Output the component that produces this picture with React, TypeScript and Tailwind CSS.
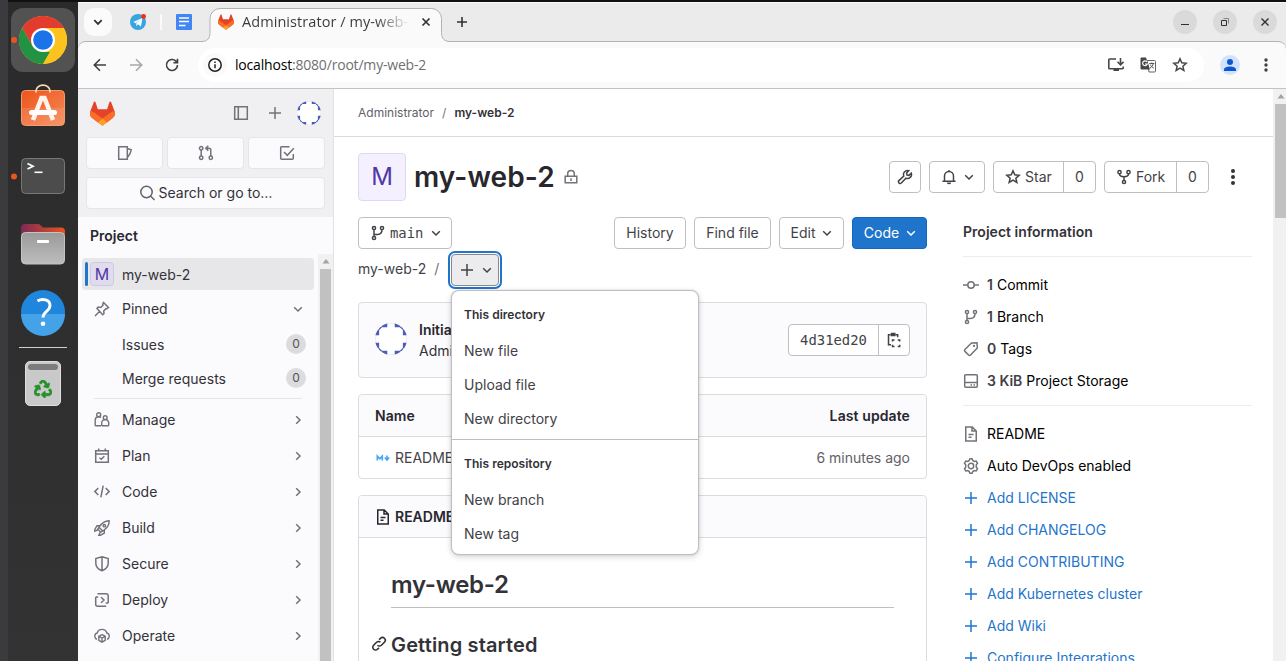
import type { ReactNode } from "react";
import { FaRecycle } from "react-icons/fa";

type IconProps = { d?: string; children?: ReactNode; className?: string; w?: number; size?: number };

function Icon({ d, children, className = "", w = 1.5, size = 16 }: IconProps) {
  return (
    <svg
      width={size}
      height={size}
      viewBox="0 0 16 16"
      fill="none"
      stroke="currentColor"
      strokeWidth={w}
      className={`shrink-0 ${className}`}
    >
      {d && <path d={d} />}
      {children}
    </svg>
  );
}

const P = {
  chevronDown: "M4.2 6.2 8 10l3.8-3.8",
  chevronRight: "M6.2 4.2 10 8l-3.8 3.8",
  plus: "M8 2v12M2 8h12",
  star: "M8 1.8l1.75 4.05 4.4.4-3.3 2.9 1 4.3L8 11.2l-3.85 2.25 1-4.3-3.3-2.9 4.4-.4z",
  doc: "M2.750 .9h6.500L13.250 5v10.100H2.750zM9 .9V5h4.200M5.500 8.500h5M5.500 11.250h3",
};

function Chevron({ className = "" }: { className?: string }) {
  return <Icon d={P.chevronDown} className={className} />;
}

function BranchIcon({ className = "" }: { className?: string }) {
  return (
    <Icon className={className}>
      <circle cx="4" cy="3" r="1.6" />
      <circle cx="4" cy="13" r="1.6" />
      <circle cx="12" cy="3" r="1.6" />
      <path d="M4 4.6v6.8M4 9.5h3.5C10 9.5 12 8 12 4.6" />
    </Icon>
  );
}

function Tanuki({ size }: { size: number }) {
  return (
    <svg width={size} height={size} viewBox="0 0 25 24" className="shrink-0">
      <path
        fill="#E24329"
        d="m24.507 9.5-.034-.09L21.082.562a.896.896 0 0 0-1.694.091l-2.29 7.01H7.825L5.535.653a.898.898 0 0 0-1.694-.09L.451 9.411.416 9.5a6.297 6.297 0 0 0 2.09 7.278l.012.01.03.022 5.16 3.867 2.56 1.935 1.554 1.176a1.051 1.051 0 0 0 1.268 0l1.555-1.176 2.56-1.935 5.197-3.89.014-.01A6.297 6.297 0 0 0 24.507 9.5Z"
      />
      <path
        fill="#FC6D26"
        d="m24.507 9.5-.034-.09a11.44 11.44 0 0 0-4.56 2.051l-7.447 5.632 4.742 3.584 5.197-3.89.014-.01A6.297 6.297 0 0 0 24.507 9.5Z"
      />
      <path
        fill="#FCA326"
        d="m7.707 20.677 2.56 1.935 1.555 1.176a1.051 1.051 0 0 0 1.268 0l1.555-1.176 2.56-1.935-4.743-3.584-4.755 3.584Z"
      />
      <path
        fill="#FC6D26"
        d="M5.01 11.461a11.43 11.43 0 0 0-4.56-2.05L.416 9.5a6.297 6.297 0 0 0 2.09 7.278l.012.01.03.022 5.16 3.867 4.745-3.584-7.444-5.632Z"
      />
    </svg>
  );
}

function Identicon({ size }: { size: number }) {
  const quarter = "M4.900 0h4.300v3.100H4.900zM14.800 0h4.300v3.100h-4.300zM2.800 5.700V2.800h2.900z";
  return (
    <svg width={size} height={size} viewBox="0 0 24 24" className="shrink-0">
      <defs>
        <clipPath id={`ident${size}`}>
          <circle cx="12" cy="12" r="12" />
        </clipPath>
      </defs>
      <circle cx="12" cy="12" r="11.7" fill="#fff" stroke="#e4e4ea" strokeWidth="0.5" />
      <g fill="#4e5cb6" clipPath={`url(#ident${size})`}>
        <path d={quarter} />
        <path d={quarter} transform="rotate(90 12 12)" />
        <path d={quarter} transform="rotate(180 12 12)" />
        <path d={quarter} transform="rotate(270 12 12)" />
      </g>
    </svg>
  );
}

function Dock() {
  return (
    <div className="flex w-[70px] shrink-0 flex-col items-center bg-[#2c2c2c] bg-linear-to-b from-[#2a2a2a] to-[#333333]">
      <div className="relative mt-[6px] flex h-16 w-16 items-center justify-center rounded-xl bg-[#525252]">
        <span className="absolute top-[29px] left-0 h-[6px] w-[6px] rounded-full bg-[#e95420]" />
        <svg width="48" height="48" viewBox="0 0 48 48">
          <circle cx="24" cy="24" r="24" fill="#fcc31e" />
          <path d="M3.2 12A24 24 0 0 1 44.8 12H24L13.6 18z" fill="#e33b2e" />
          <path d="M24 12H3.2L13.6 30z" fill="#e33b2e" />
          <path d="M3.2 12 13.6 30 24 36h7L24 48A24 24 0 0 1 3.2 12z" fill="#229342" />
          <path d="M44.8 12H24l10.4 18L24 48A24 24 0 0 0 44.8 12z" fill="#fcc31e" />
          <circle cx="24" cy="24" r="12" fill="#fff" />
          <circle cx="24" cy="24" r="9.8" fill="#1a73e8" />
        </svg>
      </div>
      <svg width="48" height="48" viewBox="0 0 48 48" className="mt-[9px]">
        <defs>
          <linearGradient id="bag" x1="0" y1="0" x2="1" y2="1">
            <stop offset="0" stopColor="#ee541c" />
            <stop offset="1" stopColor="#f58a57" />
          </linearGradient>
        </defs>
        <rect x="2.5" y="9.5" width="43" height="35" rx="4" fill="url(#bag)" stroke="#f59b70" />
        <path d="M3 27h42v14a3 3 0 0 1-3 3H6a3 3 0 0 1-3-3z" fill="#fff" opacity=".1" />
        <path d="M17 11.5V10a7 5.8 0 0 1 14 0v1.500" fill="none" stroke="#f6dcae" strokeWidth="1.8" />
        <path d="M14 39 22.500 17h3L34 39" fill="none" stroke="#fff3ec" strokeWidth="4.6" />
        <rect x="10" y="29" width="28" height="5" rx="2.500" fill="#fff" />
      </svg>
      <svg width="64" height="48" viewBox="0 0 64 48" className="mt-[24px]">
        <circle cx="3" cy="23.500" r="3" fill="#e95420" />
        <rect x="10.500" y="5.500" width="43" height="35" rx="4" fill="#4c4c4c" stroke="#777" />
        <path d="m16.500 10.500 5.500 2.700-5.500 2.700" fill="none" stroke="#fff" strokeWidth="1.700" />
        <path d="M23.500 19.300h8" stroke="#fff" strokeWidth="1.600" />
      </svg>
      <svg width="48" height="48" viewBox="0 0 48 48" className="mt-[20px]">
        <defs>
          <linearGradient id="fold" x1="0" y1="0" x2="1" y2="0">
            <stop offset="0" stopColor="#7d2a55" />
            <stop offset="1" stopColor="#e95420" />
          </linearGradient>
          <linearGradient id="front" x1="0" y1="0" x2="0" y2="1">
            <stop offset="0" stopColor="#9a9a9a" />
            <stop offset="1" stopColor="#bdbdbd" />
          </linearGradient>
        </defs>
        <path d="M2 7a4 4 0 0 1 4-4h14l4 3.500h18a4 4 0 0 1 4 4V20H2z" fill="url(#fold)" />
        <rect x="2.500" y="11.500" width="43" height="31.500" rx="4" fill="url(#front)" stroke="#c4c4c4" />
        <rect x="18" y="19" width="12" height="3" rx="1" fill="#fff" />
      </svg>
      <svg width="48" height="48" viewBox="0 0 48 48" className="mt-[19px]">
        <circle cx="24" cy="24" r="22" fill="#1f86dc" />
        <path d="M2 26h44a22 22 0 0 1-44 0z" fill="#44a3e8" />
        <path d="M18.500 13c5-3 12.500-1.500 12.500 4.500 0 6-7 5.800-7 12" fill="none" stroke="#fff" strokeWidth="2.900" />
        <circle cx="24" cy="35.800" r="2.300" fill="#fff" />
      </svg>
      <div className="mt-[11px] h-px w-12 bg-[#cfcfcf]" />
      <div className="mt-[13px] flex h-[45px] w-[36px] flex-col items-center rounded-[5px] border border-[#dedede] bg-[#c9c9c9] pt-[2px]">
        <div className="h-[6px] w-[30px] rounded-[3px] bg-[#7c7c7c]" />
        <FaRecycle size={18} stroke="#26902a" strokeWidth={22} className="mt-[10px] text-[#26902a]" />
      </div>
    </div>
  );
}

function WindowButton({ children }: { children: ReactNode }) {
  return (
    <div className="flex h-6 w-6 items-center justify-center rounded-full bg-[#dadada] text-[#303030]">
      <svg width="12" height="12" viewBox="0 0 12 12" fill="none" stroke="currentColor">
        {children}
      </svg>
    </div>
  );
}

function TabStrip() {
  return (
    <div className="relative flex h-[39px] shrink-0 items-center border-t border-[#fafafa] bg-[#ebebeb] pb-[1px]">
      <svg width="248" height="36" viewBox="0 0 248 36" className="absolute top-[4px] left-[124px] z-10">
        <path
          d="M0 35.500V34.500H0c5 0 8-3 8-9V11.500a10 10 0 0 1 10-10h211.500a10 10 0 0 1 10 10v14c0 6 3 9 8.500 9v1z"
          fill="#fafafa"
        />
        <path
          d="M0 34.500c5 0 8-3 8-9V11.500a10 10 0 0 1 10-10h211.500a10 10 0 0 1 10 10v14c0 6 3 9 8.500 9"
          fill="none"
          stroke="#b2b2b2"
        />
      </svg>
      <div className="ml-[6px] flex h-7 w-7 items-center justify-center rounded-[10px] bg-[#fbfbfb]">
        <Icon d="M4.300 6.200 8 9.900l3.700-3.700" w={1.800} className="text-[#333]" />
      </div>
      <svg width="16" height="16" viewBox="0 0 16 16" className="ml-[18px]">
        <circle cx="8" cy="8" r="8" fill="#35a6de" />
        <path d="M3 8 12.500 4l-1.600 8.500-3-2.300-1.700 1.700-.4-3z" fill="#fff" />
        <path d="m5.800 8.900 4.700-3.300-3.600 4.100-.7 2.200z" fill="#b5dcf0" />
        <circle cx="13.600" cy="2.500" r="2.400" fill="#fb2b0d" />
      </svg>
      <div className="ml-[14px] h-4 w-[2px] bg-[#fafafa]" />
      <svg width="16" height="16" viewBox="0 0 16 16" className="ml-[14px]">
        <rect width="16" height="16" rx="1" fill="#4285f4" />
        <path d="M3 4h10M3 7.500h10M3 11.500h6.500" stroke="#fff" strokeWidth="1.700" />
      </svg>
      <div className="relative z-20 ml-[26px] flex w-[216px] items-center">
        <Tanuki size={16} />
        <div className="ml-2 w-[168px] overflow-hidden bg-linear-to-r from-[#3a3a3a] from-80% to-[#3a3a3a]/0 bg-clip-text font-['Open_Sans',sans-serif] text-[14.500px] leading-5 tracking-[0.070px] whitespace-nowrap text-transparent">
          Administrator / my-web-
        </div>
        <Icon d="M4.500 4.500l7 7M11.500 4.500l-7 7" w={1.700} className="ml-2 text-[#333]" />
      </div>
      <Icon d="M8 3v10M3 8h10" w={1.600} className="ml-[20px] text-[#333]" />
      <div className="mr-[9px] ml-auto flex gap-4">
        <WindowButton>
          <path d="M2 8.500h8" />
        </WindowButton>
        <WindowButton>
          <path d="M2.500 4.500h5v5h-5z" />
          <path d="M4.500 2.500h5v5" stroke="#888" />
        </WindowButton>
        <WindowButton>
          <path d="m2.500 2.500 7 7M9.500 2.500l-7 7" strokeWidth="1.400" />
        </WindowButton>
      </div>
    </div>
  );
}

function Toolbar() {
  return (
    <div className="shrink-0 bg-[#ebebeb]">
      <div className="flex h-12 items-center rounded-t-[8px] border-t border-b border-t-[#b2b2b2] border-b-[#c3c3c3] bg-[#fafafa]">
        <Icon d="M14 8H2.500M8 2.300 2.300 8 8 13.700" w={1.600} className="ml-[14px] text-[#3f3f3f]" />
        <Icon d="M2 8h11.500M8 2.300 13.700 8 8 13.700" w={1.600} className="ml-5 text-[#a8a8a8]" />
        <Icon d="M13.500 8A5.500 5.500 0 1 1 11.900 4.100L13.500 5.700M13.500 1.800v4H9.400" w={1.600} className="ml-5 text-[#3f3f3f]" />
        <div className="ml-[18px] flex h-[34px] w-[1006px] items-center rounded-full bg-white pl-[5px]">
          <div className="flex h-6 w-6 items-center justify-center rounded-full bg-[#fafafa]">
            <Icon w={1.500} className="text-[#222]">
              <circle cx="8" cy="8" r="6.200" />
              <path d="M8 7.200v4M8 4.400v1.600" />
            </Icon>
          </div>
          <div className="-mt-[2px] ml-[8px] font-['Open_Sans',sans-serif] text-[14px] tracking-[-0.190px] text-[#707070]">
            <span className="text-black">localhost</span>:8080/root/my-web-2
          </div>
          <div className="mr-4 ml-auto flex gap-4 text-[#474747]">
            <Icon d="M8 2H1.500A.7.7 0 0 0 .8 2.700V11a.7.7 0 0 0 .7.700h13a.7.7 0 0 0 .7-.7V9.500M12.500 1v6.500M9.500 4.800l3 3 3-3M5.500 13.200h5.500" w={1.600} />
            <svg width="16" height="16" viewBox="0 0 16 16">
              <path d="M7 3.500h7.500a1 1 0 0 1 1 1V14a1 1 0 0 1-1 1H9z" fill="#fff" stroke="#666" />
              <path d="M1 .5h5l4 12H1.500a1 1 0 0 1-1-1V1.500z" fill="#474747" />
              <path d="M7 4.800A2.400 2.400 0 1 0 7.300 7H5" fill="none" stroke="#fff" strokeWidth="1.200" />
              <path d="M9.300 6.500h5M11.800 5.500v1M13.300 6.500c-.3 2-2 4-3.300 4.600M10.300 7.500c.8 2 2 3 3.500 3.600" fill="none" stroke="#555" />
            </svg>
            <Icon d={P.star} w={1.500} />
          </div>
        </div>
        <div className="ml-4 flex h-5 w-5 items-center justify-center rounded-full bg-[#d3e3fd]">
          <svg width="12" height="12" viewBox="0 0 12 12" fill="#0b57d0">
            <circle cx="6" cy="3" r="3" />
            <path d="M0 12v-1.500C0 8.500 3 7.500 6 7.500s6 1 6 3V12z" />
          </svg>
        </div>
        <svg width="4" height="16" viewBox="0 0 4 16" fill="#3f3f3f" className="ml-6">
          <circle cx="2" cy="3" r="1.700" />
          <circle cx="2" cy="8" r="1.700" />
          <circle cx="2" cy="13" r="1.700" />
        </svg>
      </div>
    </div>
  );
}

const sections: { name: string; icon: ReactNode }[] = [
  {
    name: "Manage",
    icon: (
      <Icon w={1.400}>
        <circle cx="4.700" cy="2.700" r="2" />
        <path d="M7 13.800H2a.8.8 0 0 1-.8-.8V8.300c0-2 1.500-3.600 3.500-3.600.9 0 1.700.3 2.300.8" />
        <circle cx="11.200" cy="5.700" r="1.900" />
        <path d="M7.700 13V11a3.500 3.500 0 0 1 7 0v2a.8.8 0 0 1-.8.800H8.500a.8.8 0 0 1-.8-.8z" />
      </Icon>
    ),
  },
  { name: "Plan", icon: <Icon d="M1.700 2.800h12.600v11.400H1.700zM1.700 6h12.600M4.700 .5v2.500M11.300 .5v2.500M5.500 9.700l1.800 1.600 3-3" w={1.500} /> },
  { name: "Code", icon: <Icon d="M4.300 4 .9 7.500 4.300 11M11.700 4l3.400 3.500-3.400 3.500M9.200 1.700 6.800 13.300" w={1.500} /> },
  {
    name: "Build",
    icon: (
      <Icon w={1.400}>
        <path d="M15.200.8C10.500.6 7.700 3.200 5 7.200l3.800 3.800c4-2.700 6.600-5.500 6.400-10.200zM6 5.700H3L.8 9.500v1.700L4.500 9.500M10.300 10v3L6.500 15.200H4.800l1.700-3.700M5 7.200l-1.200 2L6.800 12.200l2-1.200" />
        <circle cx="10.300" cy="5.700" r="1.200" />
      </Icon>
    ),
  },
  { name: "Secure", icon: <Icon d="M8 .8 14.200 2.500v4.800c0 3.700-2.600 6-6.200 7.500C4.400 13.300 1.800 11 1.800 7.300V2.500zM8 .8v14" w={1.500} /> },
  { name: "Deploy", icon: <Icon d="M3.500 1.700H12a2.200 2.200 0 0 1 2.200 2.200V11M1.700 5v7.200a2 2 0 0 0 2 2h8.500M1.700 5h2.500M14.200 11h-2.500M7 5.200l3 2.800-3 2.800" w={1.500} /> },
  {
    name: "Operate",
    icon: <Icon d="M3 11.300A3.300 3.300 0 0 1 3.200 5 5 5 0 0 1 12.800 5 3.300 3.300 0 0 1 13 11.300M8 6.700l3.200 1.600v4L8 14.200l-3.200-1.900v-4zM4.800 8.300 8 10l3.200-1.700M8 10v4.200" w={1.400} />,
  },
];

function ScrollArrow() {
  return (
    <svg width="8" height="5" viewBox="0 0 8 5" fill="#a2a2a2">
      <path d="M4 0 7.500 4.500h-7z" />
    </svg>
  );
}

function Sidebar() {
  return (
    <aside className="flex w-[256px] shrink-0 flex-col border-r border-[#e3e3e6] bg-[#fbfafd] text-sm text-[#333238]">
      <div className="flex h-32 flex-col bg-[#f0f0f2] px-2">
        <div className="flex h-12 items-center text-[#737278]">
          <div className="ml-1">
            <Tanuki size={25} />
          </div>
          <Icon d="M1.700 1.700h12.600v12.600H1.700zM5.300 1.700v12.600" className="ml-[118px]" />
          <Icon d={P.plus} className="ml-[18px]" />
          <div className="ml-[14px]">
            <Identicon size={24} />
          </div>
        </div>
        <div className="grid h-8 grid-cols-3 gap-1 text-[#737278]">
          <div className="flex items-center justify-center rounded border border-[#e5e5e9] bg-[#fbfafd]">
            <Icon d="M1.700 1.700h8.600v12.600H1.700zM10.300 3.500l4 1.200c-.3 2-1.800 5.500-4 8" />
          </div>
          <div className="flex items-center justify-center rounded border border-[#e5e5e9] bg-[#fbfafd]">
            <Icon>
              <circle cx="3.200" cy="3.200" r="1.700" />
              <circle cx="3.200" cy="12.800" r="1.700" />
              <circle cx="12.800" cy="12.800" r="1.700" />
              <path d="M3.200 4.900v6.200M12.800 11.100V5.200a2 2 0 0 0-2-2H8M10.300.8 7.800 3.200l2.500 2.400" />
            </Icon>
          </div>
          <div className="flex items-center justify-center rounded border border-[#e5e5e9] bg-[#fbfafd]">
            <Icon d="M10.500 1.700H2.700a1 1 0 0 0-1 1v10.600a1 1 0 0 0 1 1h10.600a1 1 0 0 0 1-1V9M5 7l3.300 3.300 6.500-7" />
          </div>
        </div>
        <div className="mt-2 flex h-8 items-center justify-center rounded border border-[#e5e5e9] bg-[#fbfafd]">
          <Icon className="text-[#626168]">
            <circle cx="7.500" cy="7" r="5.700" />
            <path d="m11.500 11 4 4" />
          </Icon>
          <span className="ml-1">Search or go to…</span>
        </div>
      </div>
      <div className="flex h-[37px] items-center pl-3 text-sm font-semibold text-[#28272d]">Project</div>
      <div className="flex min-h-0 flex-1">
        <nav className="w-[240px] overflow-hidden pt-1">
          <div className="ml-1 flex h-8 w-[232px] items-center rounded bg-[#e7e6e9] pl-[3px]">
            <span className="h-6 w-[3px] rounded-full bg-[#1f75cb]" />
            <span className="ml-[2px] flex h-6 w-6 items-center justify-center rounded border border-[#cfc8e4] bg-[#e0dbed] text-base text-[#5138a5]">
              M
            </span>
            <span className="ml-2 pt-[2px]">my-web-2</span>
          </div>
          <div className="mt-[3px] flex h-8 items-center pl-4">
            <Icon d="m9.500 1.500 5 5-1.500 1.300-1-.2-2.300 2.300.3 2.600-1.300 1.200L3 7.500l1.200-1.400 2.600.4L9 4.200l-.3-1zM5.800 10.200 1 15" w={1.500} className="text-[#737278]" />
            <span className="ml-3">Pinned</span>
            <Chevron className="mr-3 ml-auto text-[#737278]" />
          </div>
          <div className="mt-[2px]">
            {["Issues", "Merge requests"].map((t) => (
              <div key={t} className="flex h-[34px] items-center pt-[2px] pr-[12px] pl-11">
                <span>{t}</span>
                <span className="mb-[2px] ml-auto flex h-5 w-5 items-center justify-center rounded-full bg-[#dcdcde] text-xs text-[#535158]">
                  0
                </span>
              </div>
            ))}
          </div>
          <div className="mt-[3px] ml-4 w-[208px] border-t border-[#e5e5e8]" />
          <div className="mt-[3px]">
            {sections.map((s) => (
              <div key={s.name} className="flex h-9 items-center pl-4">
                <span className="text-[#737278]">{s.icon}</span>
                <span className="ml-3">{s.name}</span>
                <Icon d={P.chevronRight} className="mr-3 ml-auto text-[#737278]" />
              </div>
            ))}
          </div>
        </nav>
        <div className="flex w-[15px] flex-col items-center bg-[#f1f1f1]">
          <div className="flex h-[15px] items-center">
            <ScrollArrow />
          </div>
          <div className="w-[11px] flex-1 bg-[#c1c1c1]" />
        </div>
      </div>
    </aside>
  );
}

const btn = "flex h-8 items-center rounded border border-[#bfbfc3] bg-white text-[#434248]";

function ProjectHeader() {
  return (
    <div className="flex h-12 w-[894px] items-center">
      <div className="flex h-12 w-12 items-center justify-center rounded border border-[#dfd9ee] bg-[#f4f0ff] text-2xl text-[#5138a5]">
        M
      </div>
      <h1 className="ml-2 text-[28px] font-semibold tracking-[0.080px] text-[#28272d]">my-web-2</h1>
      <Icon d="M2.200 7.200h11.600v6.600H2.200zM4.700 7.200V4.700a3.300 3.300 0 0 1 6.600 0v2.500M8 9.300v2.700" className="ml-[8px] text-[#737278]" />
      <div className="ml-auto flex gap-2">
        <div className={`${btn} w-8 justify-center`}>
          <Icon d="M14.300 4.200a4 4 0 0 1-5.300 5L4.300 14a1.700 1.700 0 0 1-2.400-2.400L6.800 7a4 4 0 0 1 5-5.300L9.600 4l.4 2 2 .4z" />
        </div>
        <div className={`${btn} w-14 justify-center gap-1 pl-[3px]`}>
          <Icon d="M3.500 12.300V7a4.500 4.500 0 0 1 9 0v5.300M1.500 12.300h13M6.500 13.500a1.600 1.600 0 0 0 3 0M8 1v1.500" />
          <Chevron />
        </div>
        <div className={btn}>
          <div className="flex h-full w-[70px] items-center gap-1 border-r border-[#bfbfc3] pl-[11px]">
            <Icon d={P.star} />
            Star
          </div>
          <div className="w-[31px] text-center">0</div>
        </div>
        <div className={btn}>
          <div className="flex h-full w-[72px] items-center gap-1 border-r border-[#bfbfc3] pl-[11px]">
            <Icon>
              <circle cx="3.500" cy="3.200" r="1.600" />
              <circle cx="12.500" cy="3.200" r="1.600" />
              <circle cx="8" cy="13" r="1.600" />
              <path d="M3.500 4.800c0 2.200 1.500 3 4.500 3s4.500-.8 4.500-3M8 7.800v3.600" />
            </Icon>
            Fork
          </div>
          <div className="w-[31px] text-center">0</div>
        </div>
        <div className="ml-2 flex h-8 w-4 items-center justify-center">
          <svg width="4" height="16" viewBox="0 0 4 16" fill="#333238">
            <circle cx="2" cy="2" r="2" />
            <circle cx="2" cy="8" r="2" />
            <circle cx="2" cy="14" r="2" />
          </svg>
        </div>
        <div className="w-[3px]" />
      </div>
    </div>
  );
}

function Menu() {
  return (
    <div className="absolute top-[73px] left-[93px] z-30 h-[265px] w-[248px] rounded-lg border border-[#bfbfc3] bg-white tracking-[0.020px] text-[#434248] shadow-[0_2px_6px_rgba(5,5,6,0.16),0_0_2px_rgba(5,5,6,0.16)]">
      <div className="flex h-[43px] items-center pt-[5px] pl-3 text-xs font-semibold text-[#333238]">This directory</div>
      {["New file", "Upload file", "New directory"].map((t) => (
        <div key={t} className="flex h-[34px] items-center pl-3">
          {t}
        </div>
      ))}
      <div className="mt-[3px] flex h-[44px] items-center border-t border-[#bfbfc3] pt-[5px] pl-3 text-xs font-semibold text-[#333238]">
        This repository
      </div>
      {["New branch", "New tag"].map((t) => (
        <div key={t} className="flex h-[34px] items-center pl-3">
          {t}
        </div>
      ))}
    </div>
  );
}

function Files() {
  return (
    <div className="relative w-[569px]">
      <div className="flex h-8 items-center">
        <div className={`${btn} w-[94px] pl-[11px]`}>
          <BranchIcon />
          <span className="ml-1 font-['DejaVu_Sans_Mono',monospace] text-[13.900px] leading-5">main</span>
          <Chevron className="ml-[5px]" />
        </div>
        <div className="ml-auto flex gap-2">
          <div className={`${btn} w-[72px] justify-center`}>History</div>
          <div className={`${btn} w-[77px] justify-center`}>Find file</div>
          <div className={`${btn} w-[65px] justify-center gap-1 pl-[3px]`}>
            Edit
            <Chevron />
          </div>
          <div className="flex h-8 w-[75px] items-center justify-center gap-1 rounded border border-[#1068bf] bg-[#1f75cb] pl-[4px] text-white">
            Code
            <Chevron />
          </div>
        </div>
      </div>
      <div className="mt-[5px] flex h-8 items-center text-[#434248]">
        <span className="-mt-[2px]">my-web-2</span>
        <span className="-mt-[2px] ml-2 text-[#737278]">/</span>
        <div className="ml-[12px] flex h-8 w-12 items-center justify-center gap-1 rounded border border-[#89888d] bg-[#ececef] pl-[4px] shadow-[0_0_0_1px_#fff,0_0_0_3px_#1f75cb]">
          <Icon d="M8 2v12M2 8h12" className="text-[#434248]" />
          <Chevron />
        </div>
      </div>
      <Menu />
      <div className="mt-4 flex h-[76px] items-center rounded border border-[#dcdcde] bg-[#fbfafd] px-4">
        <div className="-mt-[2px]">
          <Identicon size={32} />
        </div>
        <div className="ml-3 leading-[21px] text-[#333238]">
          <div className="font-semibold text-[#28272d]">Initial commit</div>
          <div>Administrator authored 6 minutes ago</div>
        </div>
        <div className={`${btn} ml-auto`}>
          <div className="flex h-full w-[90px] items-center justify-center border-r border-[#bfbfc3] pt-[2px] font-['DejaVu_Sans_Mono',monospace] text-[13.900px]">
            4d31ed20
          </div>
          <div className="flex w-[30px] justify-center">
            <Icon d="M4.700 2.700H2.500v10.100H5M9.500 2.700h2.200v2.500M6.500 9.600V8h2M11.700 8h2v1.600M13.700 12.800v1.600h-2M8.500 14.400h-2v-1.600">
              <path d="M5.500 1.500h3.300v2H5.500z" fill="currentColor" />
            </Icon>
          </div>
        </div>
      </div>
      <div className="mt-4 h-[85px] rounded border border-[#dcdcde] bg-white">
        <div className="flex h-[42px] items-center justify-between rounded-t border-b border-[#dcdcde] bg-[#fbfafd] px-4 font-semibold text-[#28272d]">
          <span className="tracking-[0.050px]">Name</span>
          <span className="tracking-[0.100px]">Last update</span>
        </div>
        <div className="flex h-[41px] items-center px-4 text-[#434248]">
          <svg width="16" height="16" viewBox="0 0 16 16" fill="none" stroke="#42a5f5" strokeWidth="1.600">
            <path d="M2.300 10.500V6l2.500 2.700L7.300 6v4.500M12 5.500v4M9.800 7.500l2.200 2.500 2.200-2.500" />
          </svg>
          <span className="ml-1">README.md</span>
          <span className="ml-auto text-[#626168]">6 minutes ago</span>
        </div>
      </div>
      <div className="mt-4 h-[300px] rounded border border-[#dcdcde] bg-white">
        <div className="flex h-[42px] items-center rounded-t border-b border-[#dcdcde] bg-[#fbfafd] px-4 font-semibold text-[#28272d]">
          <Icon d={P.doc} />
          <span className="ml-1">README.md</span>
        </div>
        <div className="px-8 pt-[31px] text-[#333238]">
          <h2 className="h-[39px] border-b border-[#bfbfc3] text-2xl leading-[32px] font-semibold tracking-[-0.300px]">my-web-2</h2>
          <div className="mt-[21px] -ml-5 flex items-center">
            <Icon
              d="M6.500 9.200a2.700 2.700 0 0 0 3.900 0l3-3a2.700 2.700 0 0 0-3.900-3.900L8 3.700M9.500 6.300a2.700 2.700 0 0 0-3.900 0l-3 3a2.700 2.700 0 0 0 3.900 3.900L8 11.800"
              w={1.600}
              className="-mt-[2px]"
            />
            <h3 className="ml-1 text-xl leading-8 font-semibold tracking-[0.150px]">Getting started</h3>
          </div>
        </div>
      </div>
    </div>
  );
}

const stats: { n: string; label: string; icon: ReactNode }[] = [
  {
    n: "1",
    label: "Commit",
    icon: (
      <Icon>
        <circle cx="8" cy="8" r="3.200" />
        <path d="M0 8h4.800M11.200 8H16" />
      </Icon>
    ),
  },
  { n: "1", label: "Branch", icon: <BranchIcon /> },
  {
    n: "0",
    label: "Tags",
    icon: (
      <Icon>
        <path d="M8.500 2 14 1.700 14.300 7l-6.800 7a1.300 1.300 0 0 1-1.900 0L1.900 10.400a1.300 1.300 0 0 1 0-1.900z" />
        <circle cx="11" cy="5" r=".4" />
      </Icon>
    ),
  },
  {
    n: "3 KiB",
    label: "Project Storage",
    icon: <Icon d="M1.700 2.700a1 1 0 0 1 1-1h10.600a1 1 0 0 1 1 1v10.600a1 1 0 0 1-1 1H2.700a1 1 0 0 1-1-1zM1.700 9.500h12.600M7.500 12h1.500M10.500 12H12" />,
  },
];

const links = [
  "Add LICENSE",
  "Add CHANGELOG",
  "Add CONTRIBUTING",
  "Add Kubernetes cluster",
  "Add Wiki",
  "Configure Integrations",
];

function InfoPanel() {
  return (
    <div className="ml-9 w-[289px] text-black">
      <div className="h-[40px] border-b border-[#ececef] pt-[5px] font-semibold tracking-[0.030px] text-[#333238]">
        Project information
      </div>
      <div className="mt-3 h-[137px] border-b border-[#ececef]">
        {stats.map((s) => (
          <div key={s.label} className="flex h-8 items-center">
            <span className="mr-2 text-[#737278]">{s.icon}</span>
            <span className="mr-1 font-semibold text-[#434248]">{s.n}</span>
            {s.label}
          </div>
        ))}
      </div>
      <div className="mt-3">
        <div className="flex h-8 items-center gap-2">
          <Icon d={P.doc} className="text-[#737278]" />
          README
        </div>
        <div className="flex h-8 items-center gap-2">
          <Icon className="text-[#737278]" w={1.500}>
            <path d="M6.200 2.500 6.900.8h2.200l.7 1.700 1.500.9 1.900-.3 1.300 2L13.300 6.700v2.600l1.200 1.600-1.300 2-1.900-.3-1.500.9-.7 1.700H6.900l-.7-1.700-1.500-.9-1.900.3-1.300-2 1.200-1.600V6.700L1.500 5.100l1.300-2 1.900.3z" />
            <circle cx="8" cy="8" r="2.700" />
          </Icon>
          Auto DevOps enabled
        </div>
        {links.map((l) => (
          <div key={l} className="flex h-8 items-center gap-2 text-[#1f75cb]">
            <Icon d={P.plus} />
            {l}
          </div>
        ))}
      </div>
    </div>
  );
}

export default function App() {
  return (
    <div className="flex h-[661px] w-[1286px] overflow-hidden bg-[#3b3b3d] pl-2 font-['Inter',sans-serif]">
      <div className="flex min-w-0 flex-1 flex-col">
        <div className="h-[2px] shrink-0 bg-[#131010]" />
        <div className="flex min-h-0 flex-1">
          <Dock />
          <div className="flex min-w-0 flex-1 flex-col bg-white">
            <TabStrip />
            <Toolbar />
            <div className="flex min-h-0 flex-1">
              <Sidebar />
              <main className="min-w-0 flex-1 overflow-hidden text-sm">
                <div className="flex h-12 items-center border-b border-[#dcdcde] pl-6 text-xs">
                  <span className="text-[#626168]">Administrator</span>
                  <span className="mx-2 text-[#737278]">/</span>
                  <span className="font-semibold text-[#333238]">my-web-2</span>
                </div>
                <div className="pt-4 pl-6">
                  <ProjectHeader />
                  <div className="mt-4 flex items-start">
                    <Files />
                    <InfoPanel />
                  </div>
                </div>
              </main>
              <div className="flex w-[13px] flex-col items-end bg-[#f1f1f1]">
                <div className="flex h-[15px] w-[11px] items-center justify-center">
                  <ScrollArrow />
                </div>
                <div className="h-[114px] w-[11px] bg-[#c1c1c1]" />
              </div>
            </div>
          </div>
        </div>
      </div>
    </div>
  );
}
